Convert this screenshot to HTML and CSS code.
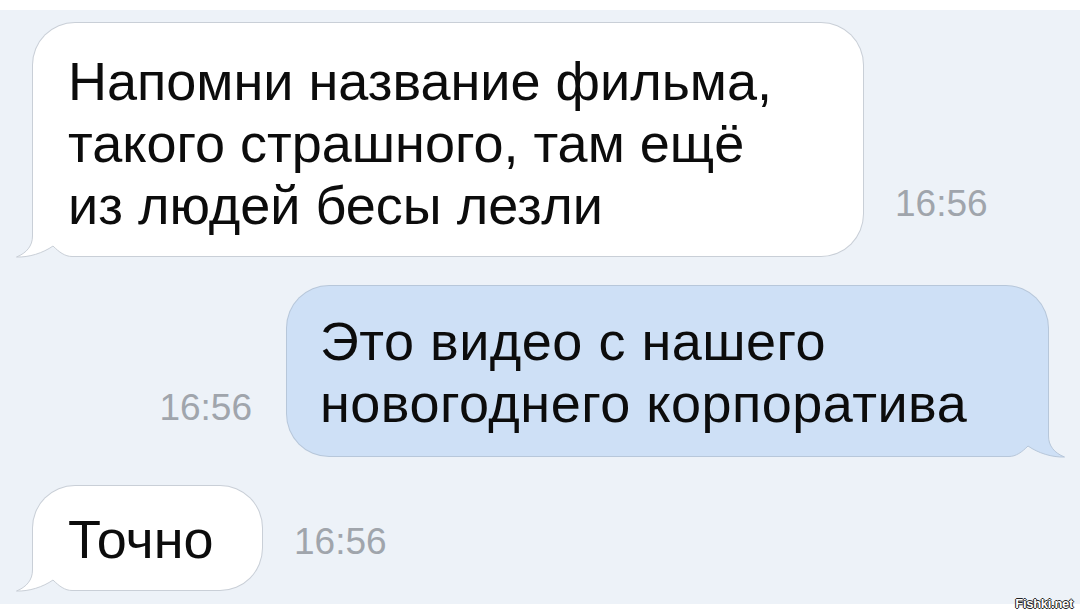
FILE: index.html
```html
<!DOCTYPE html>
<html lang="ru">
<head>
    <meta charset="UTF-8">
    <meta name="viewport" content="width=device-width, initial-scale=1.0">
    <title>Переписка</title>
    <link rel="stylesheet" href="styles.css">
</head>
<body>
    <div class="chat">
        <div class="row">
            <div class="bubble bubble-in bubble-wide">
                Напомни название фильма,<br>
                такого страшного, там ещё<br>
                из людей бесы лезли
                <svg class="tail" width="60" height="28" viewBox="0 0 60 28">
                    <rect class="tail-bg" x="0" y="0" width="60" height="28"/>
                    <path class="tail-fill" d="M17.5,0 V6 C17.5,16 11.5,23 1.5,27 C14,27.5 28,23 38,16 C44,22 50,26.5 57,26.5 L60,26.5 V0 Z"/>
                    <path class="tail-line" d="M17.5,0 V6 C17.5,16 11.5,23 1.5,27 C14,27.5 28,23 38,16 C44,22 50,26.5 57,26.5 L60,26.5"/>
                </svg>
            </div>
            <span class="time time-first">16:56</span>
        </div>

        <div class="row row-out">
            <span class="time">16:56</span>
            <div class="bubble bubble-out">
                Это видео с нашего<br>
                новогоднего корпоратива
                <svg class="tail tail-right" width="60" height="28" viewBox="0 0 60 28">
                    <rect class="tail-bg" x="0" y="0" width="60" height="28"/>
                    <path class="tail-fill" d="M17.5,0 V6 C17.5,16 11.5,23 1.5,27 C14,27.5 28,23 38,16 C44,22 50,26.5 57,26.5 L60,26.5 V0 Z"/>
                    <path class="tail-line" d="M17.5,0 V6 C17.5,16 11.5,23 1.5,27 C14,27.5 28,23 38,16 C44,22 50,26.5 57,26.5 L60,26.5"/>
                </svg>
            </div>
        </div>

        <div class="row">
            <div class="bubble bubble-in bubble-short">
                Точно
                <svg class="tail" width="60" height="28" viewBox="0 0 60 28">
                    <rect class="tail-bg" x="0" y="0" width="60" height="28"/>
                    <path class="tail-fill" d="M17.5,0 V6 C17.5,16 11.5,23 1.5,27 C14,27.5 28,23 38,16 C44,22 50,26.5 57,26.5 L60,26.5 V0 Z"/>
                    <path class="tail-line" d="M17.5,0 V6 C17.5,16 11.5,23 1.5,27 C14,27.5 28,23 38,16 C44,22 50,26.5 57,26.5 L60,26.5"/>
                </svg>
            </div>
            <span class="time">16:56</span>
        </div>
    </div>

    <div class="watermark">Fishki.net</div>
</body>
</html>
```

FILE: styles.css
```css
body {
    font-family: "Liberation Sans", Arial, "Noto Sans", sans-serif;
    margin: 0;
    padding: 0;
    background-color: #fff;
    color: #0c0c0c;
    position: relative;
    height: 616px;
    overflow: hidden;
}
.chat {
    margin-top: 10px;
    height: 594px;
    box-sizing: border-box;
    padding-top: 13px;
    background-color: #edf2f8;
    display: flex;
    flex-direction: column;
    gap: 30px;
}
.row {
    display: flex;
    align-items: flex-end;
    gap: 32px;
    padding-left: 33px;
}
.row-out {
    justify-content: flex-end;
    padding-left: 0;
    padding-right: 32px;
    gap: 35px;
}
.bubble {
    position: relative;
    box-sizing: border-box;
    padding: 22px 30px 24px 35px;
    font-size: 54px;
    line-height: 62px;
    border-radius: 42px;
    white-space: nowrap;
}
.bubble-in {
    background-color: #fff;
    box-shadow: 0 0 0 1px #c9cfd7;
    border-bottom-left-radius: 0;
}
.bubble-out {
    width: 761px;
    padding-left: 33px;
    padding-top: 24px;
    padding-bottom: 22px;
    background-color: #cee0f6;
    box-shadow: 0 0 0 1px #b7c7da;
    border-bottom-right-radius: 0;
    letter-spacing: 0.5px;
}
.bubble-wide {
    width: 830px;
    padding-top: 27px;
    padding-bottom: 20px;
}
.bubble-short {
    width: 229px;
    padding-top: 22px;
    padding-bottom: 20px;
}
.tail {
    position: absolute;
    left: -18px;
    bottom: -2px;
}
.tail-right {
    left: auto;
    right: -18px;
    transform: scaleX(-1);
}
.tail-bg {
    fill: #edf2f8;
}
.tail-fill {
    fill: #fff;
}
.tail-line {
    fill: none;
    stroke: #c9cfd7;
    stroke-width: 1;
}
.tail-right .tail-fill {
    fill: #cee0f6;
}
.tail-right .tail-line {
    stroke: #b7c7da;
}
.time {
    font-size: 37px;
    line-height: 37px;
    color: #a0a5ac;
    margin-bottom: 30px;
}
.time-first {
    margin-bottom: 34px;
}
.watermark {
    position: absolute;
    right: 7px;
    bottom: 5px;
    font-size: 13px;
    font-weight: bold;
    letter-spacing: -0.3px;
    color: #fff;
    text-shadow: 1px 0 0 #222, -1px 0 0 #222, 0 1px 0 #222, 0 -1px 0 #222;
}
```
